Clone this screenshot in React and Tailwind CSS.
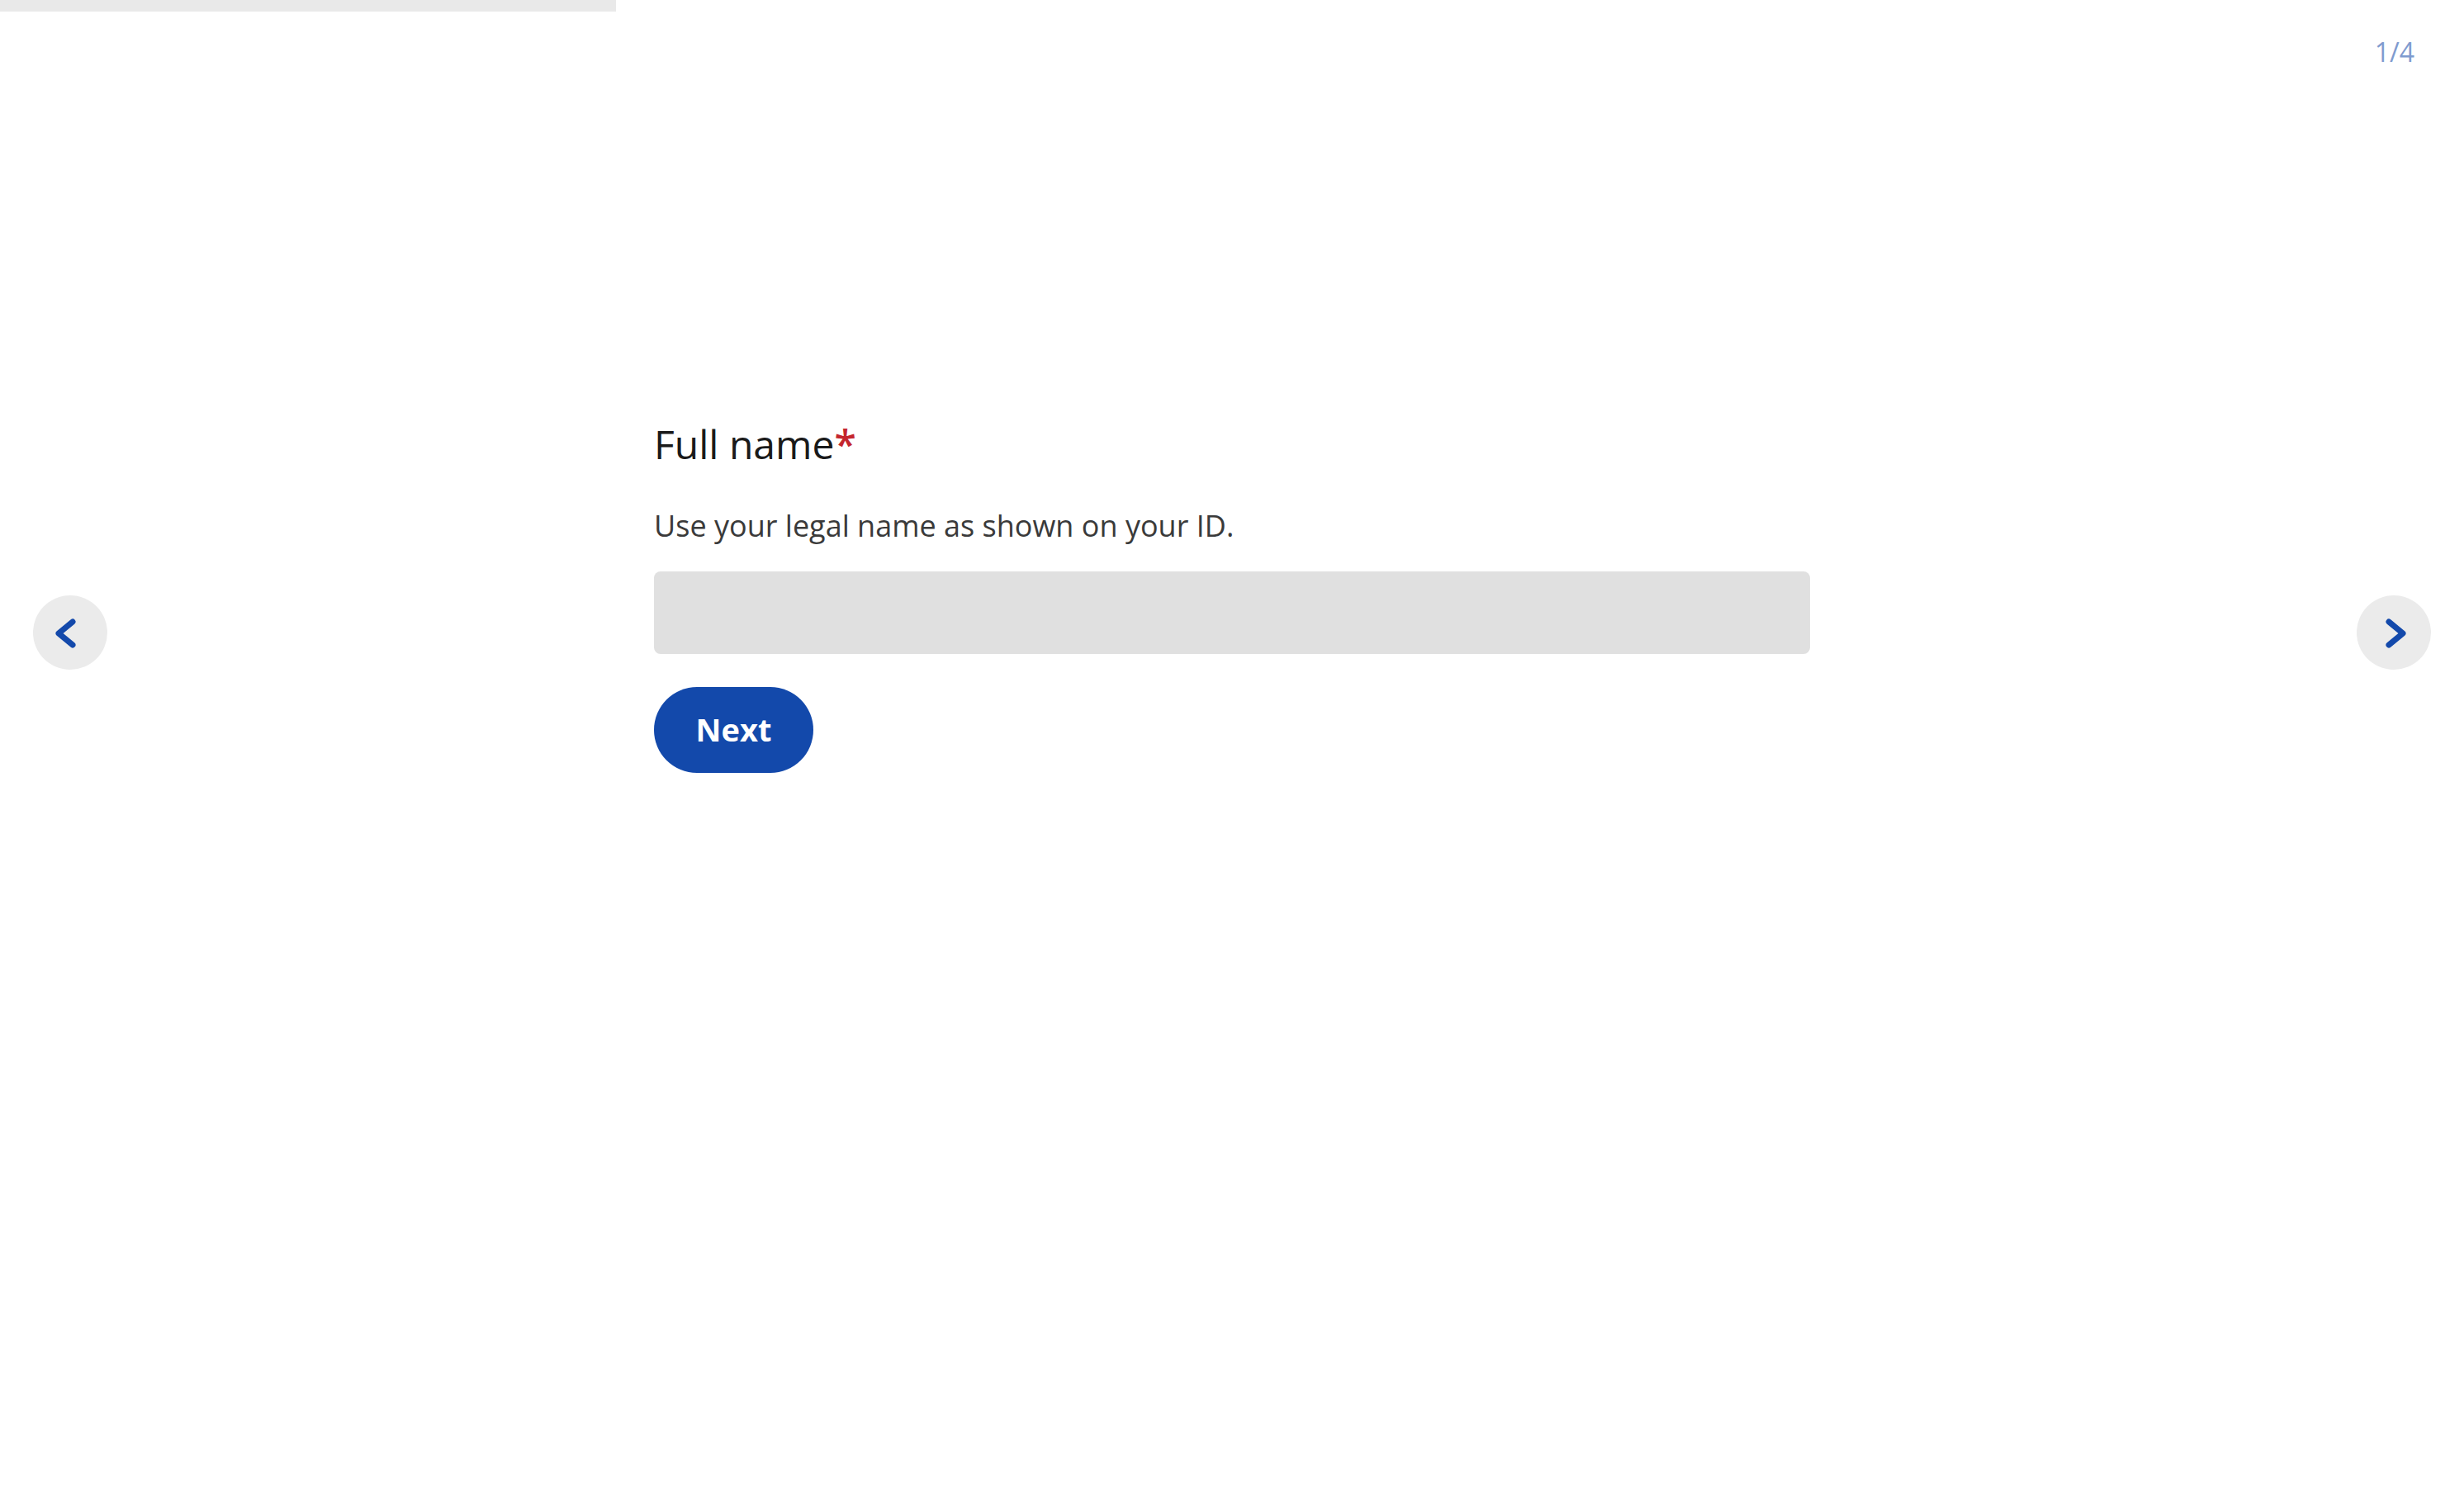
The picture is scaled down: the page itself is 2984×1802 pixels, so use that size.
import { useState } from 'react';

function Chevron({ dir }) {
    const points = dir === 'left' ? '48,32 31,46 48,60' : '39,32 56,46 39,60';
    return (
        <svg width="90" height="90" viewBox="0 0 90 90" fill="none">
            <polyline
                points={points}
                stroke="#1349ab"
                strokeWidth="7"
                strokeLinecap="round"
                strokeLinejoin="round"
            />
        </svg>
    );
}

export default function App() {
    const [name, setName] = useState('');
    const step = 1;
    const total = 4;

    return (
        <div className="relative min-h-screen bg-white font-['Open_Sans',sans-serif]">
            {/* Progress */}
            <div className="h-[14px] w-full">
                <div
                    className="h-full bg-[#e9e9e9]"
                    style={{ width: `${(step / total) * 100}%` }}
                />
            </div>

            {/* Step counter */}
            <div className="absolute right-[60px] top-[39px] text-[32px] leading-[1.5] text-[#7f9bcf]">
                {step}/{total}
            </div>

            {/* Arrows */}
            <button className="absolute left-[40px] top-[721px] flex h-[90px] w-[90px] items-center justify-center rounded-full bg-[#ebebeb]">
                <Chevron dir="left" />
            </button>
            <button className="absolute right-[40px] top-[721px] flex h-[90px] w-[90px] items-center justify-center rounded-full bg-[#ebebeb]">
                <Chevron dir="right" />
            </button>

            {/* Question */}
            <div className="ml-[792px] flex w-[1400px] flex-col pt-[495px]">
                <label className="text-[48px] leading-[1.2] text-[#1a1a1a]">
                    Full name<span className="font-semibold text-[#c4262e]">*</span>
                </label>
                <p className="mt-[47px] text-[36px] leading-[45px] text-[#3a3a3a]">
                    Use your legal name as shown on your ID.
                </p>
                <input
                    value={name}
                    onChange={e => setName(e.target.value)}
                    className="mt-[33px] h-[100px] w-full rounded-[8px] bg-[#e0e0e0] px-6 text-[30px] outline-none"
                />
                <button className="mt-[40px] flex h-[104px] w-[193px] items-center justify-center rounded-full bg-[#1349ab] text-[38px] font-bold text-white">
                    Next
                </button>
            </div>
        </div>
    );
}
